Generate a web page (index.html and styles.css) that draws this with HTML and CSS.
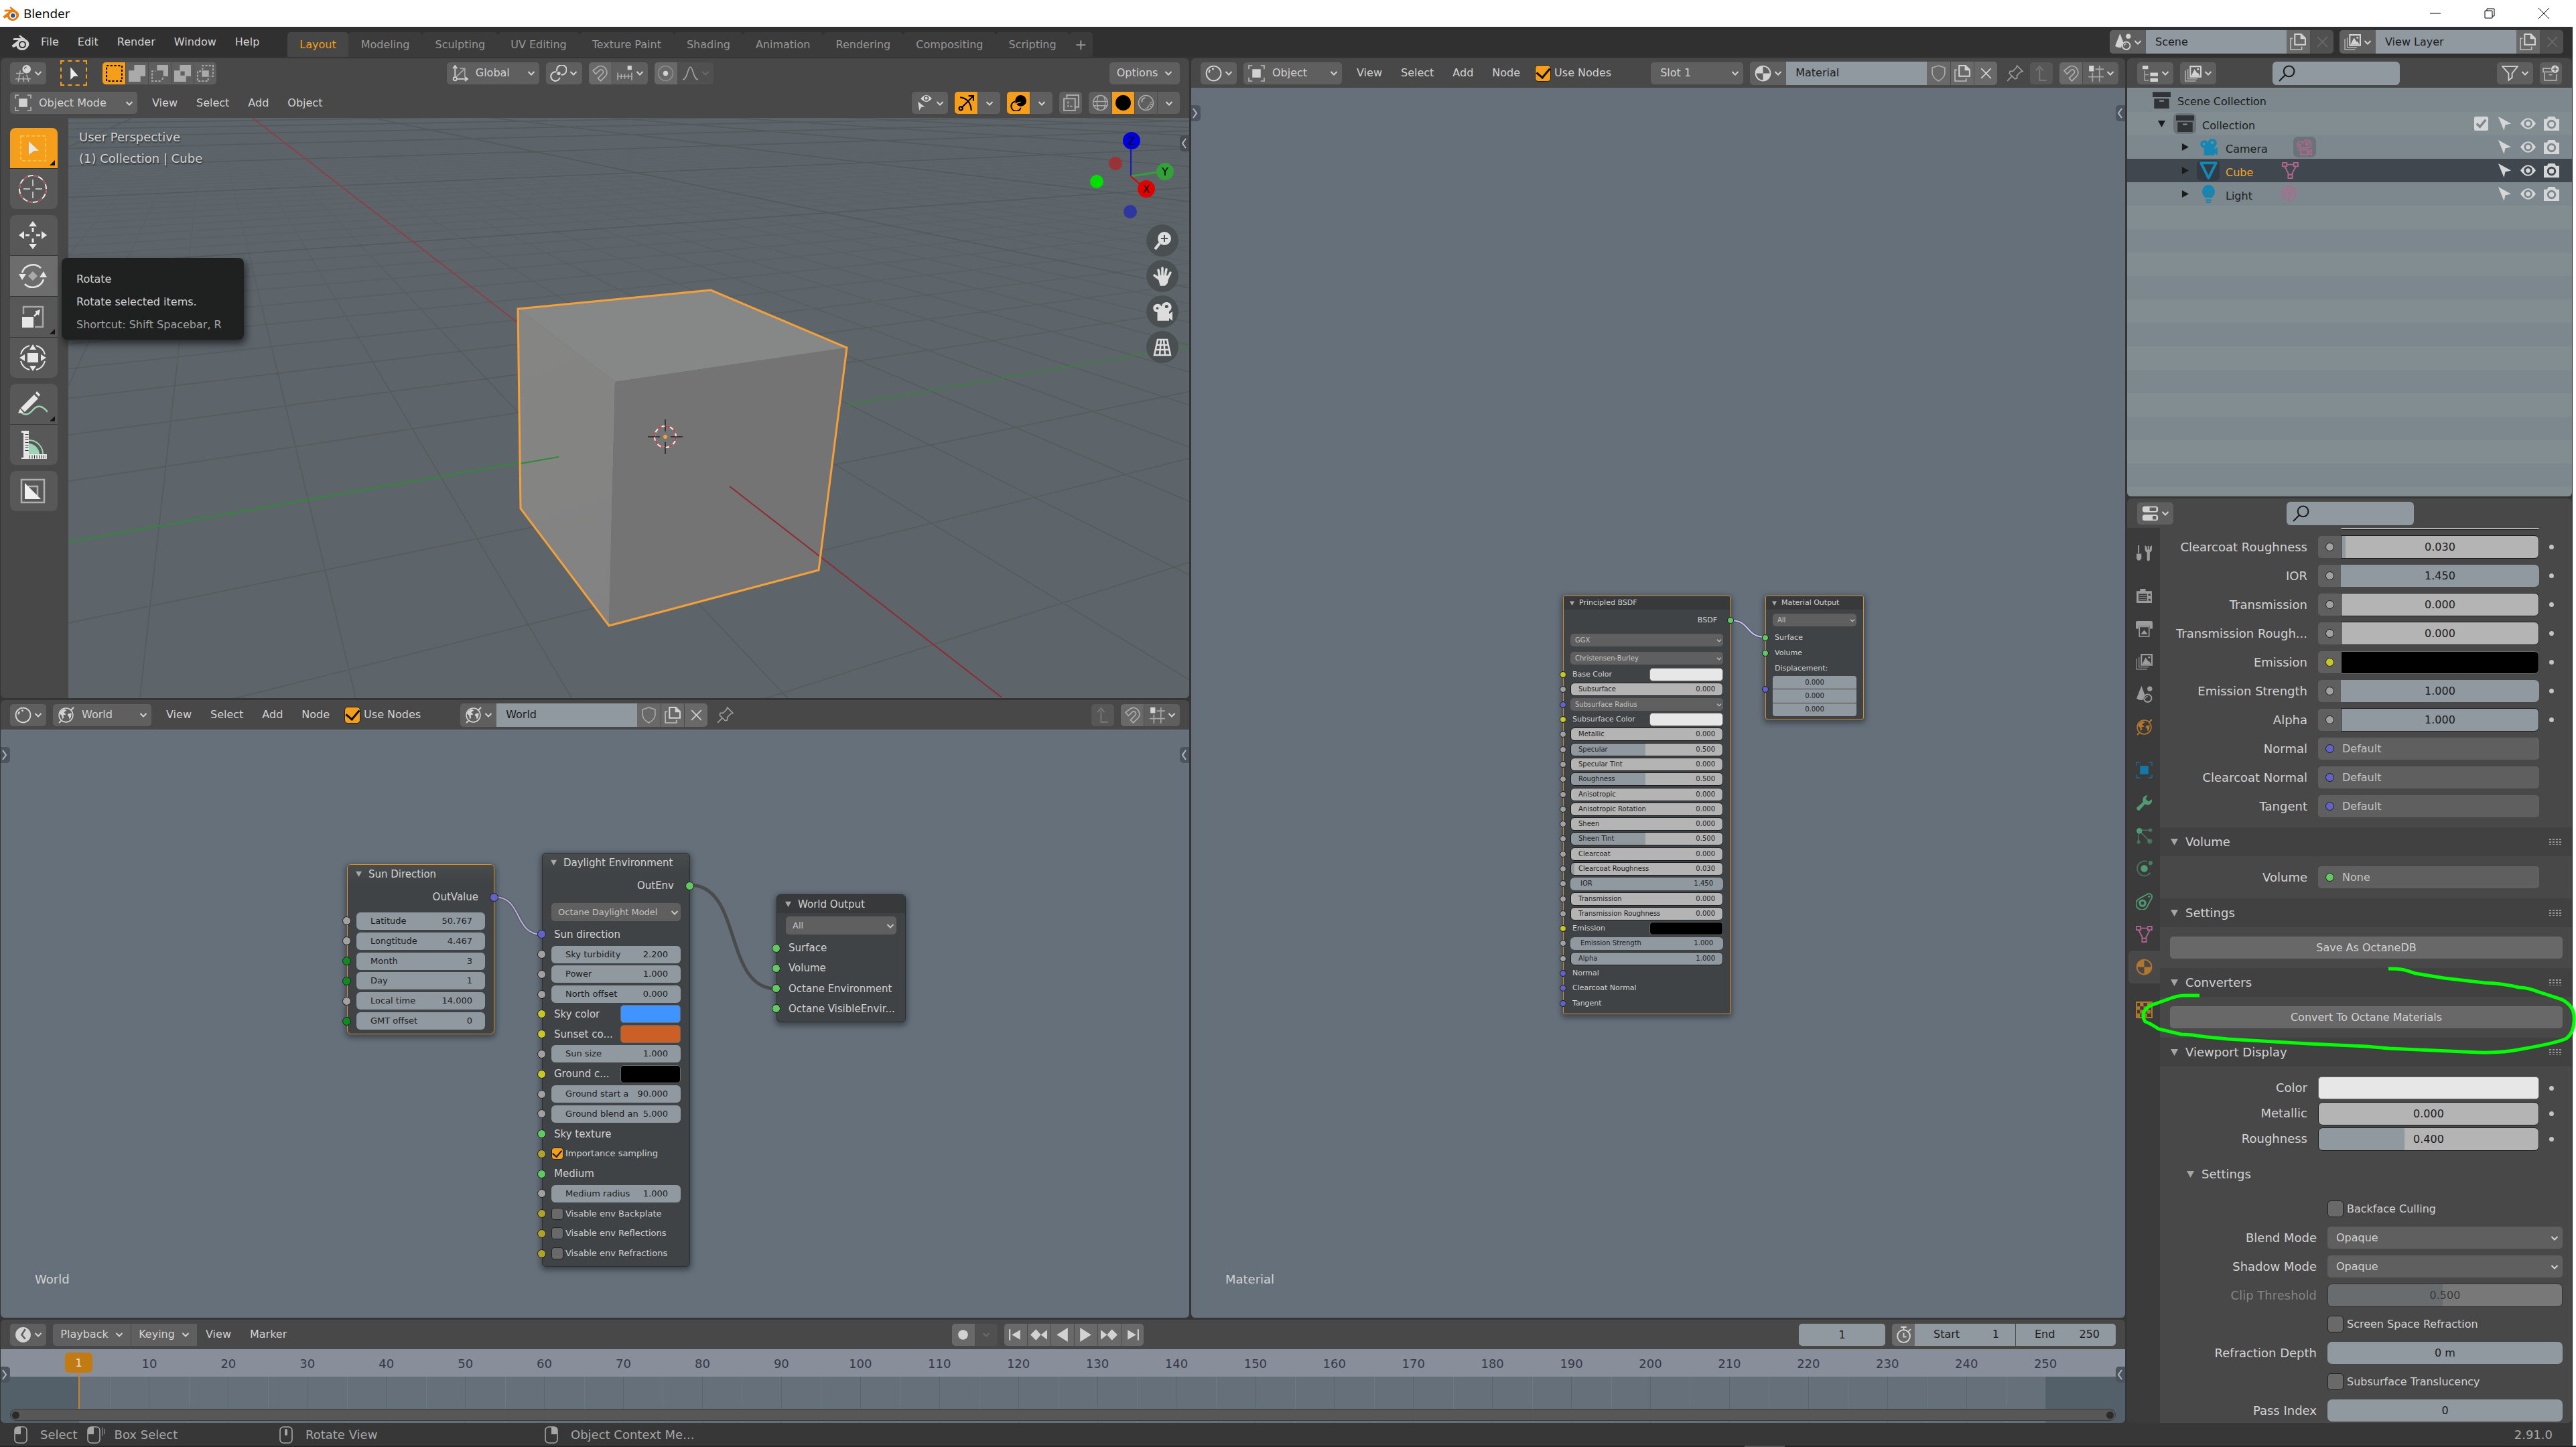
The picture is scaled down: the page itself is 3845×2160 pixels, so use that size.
FILE: index.html
```html
<!DOCTYPE html>
<html lang="en">
<head>
<meta charset="utf-8">
<title>Blender</title>
<link rel="stylesheet" href="styles.css">
</head>
<body>
<svg class="sprite" aria-hidden="true">
  <defs>
  <symbol id="chev" viewBox="0 0 12 12"><path d="M1.500 4L6 8.500L10.500 4" fill="none" stroke="currentColor" stroke-width="2"/></symbol>
  <symbol id="left" viewBox="0 0 12 24"><path d="M9 5L4 12L9 19" fill="none" stroke="currentColor" stroke-width="2"/></symbol>
  <symbol id="right" viewBox="0 0 12 24"><path d="M3 5L8 12L3 19" fill="none" stroke="currentColor" stroke-width="2"/></symbol>
  <symbol id="logo" viewBox="0 0 28 26"><path d="M13 2L25 11Q28 15 26 19Q22 25 17 25Q10 25 8 19L3 21L1 18L11 10H3L4 7H15L12 4Z" fill="currentColor"/><circle cx="17" cy="16.500" r="5.500" fill="var(--hole)"/><circle cx="17" cy="16.500" r="3.500" fill="var(--dot)"/></symbol>
  <symbol id="ed3d" viewBox="0 0 24 24"><path d="M2 12H13M1 20H23M8 8L5 24M17 14L20 24M12 16L13 24" stroke="currentColor" stroke-width="1.500" opacity=".7"/><circle cx="17" cy="6" r="6" fill="currentColor"/><path d="M14 6Q14 3 17 3" stroke="#5f5f5f" fill="none"/></symbol>
  <symbol id="cursor" viewBox="0 0 24 24"><path d="M7 3L18 16L12 16L7 21Z" fill="currentColor"/></symbol>
  <symbol id="boxsel" viewBox="0 0 24 24"><path d="M1 1H23V23H1Z" fill="none" stroke="currentColor" stroke-width="2" stroke-dasharray="3 2.500"/></symbol>
  <symbol id="selext" viewBox="0 0 24 24"><path d="M8 0H24V16H17V24H0V8H8Z" fill="currentColor"/></symbol>
  <symbol id="selsub" viewBox="0 0 24 24"><path d="M8 0H24V16H17V8H8Z" fill="currentColor"/><path d="M13 23H1V9H6M16 18V23" fill="none" stroke="currentColor" stroke-width="2" stroke-dasharray="3 2"/></symbol>
  <symbol id="seldiff" viewBox="0 0 24 24"><path fill-rule="evenodd" d="M8 0H24V16H17V24H0V8H8ZM9 9V15H15V9Z" fill="currentColor"/></symbol>
  <symbol id="selint" viewBox="0 0 24 24"><path d="M7 8H17V17H7Z" fill="currentColor"/><path d="M8 7V1H23V16H18M6 9H1V23H16V18" fill="none" stroke="currentColor" stroke-width="2" stroke-dasharray="3 2"/></symbol>
  <symbol id="objmode" viewBox="0 0 24 24"><path d="M6 6H18V18H6Z" fill="currentColor"/><path d="M1 6V1H6M18 1H23V6M23 18V23H18M6 23H1V18" fill="none" stroke="currentColor" stroke-width="2" opacity=".6"/></symbol>
  <symbol id="axes" viewBox="0 0 24 24"><g fill="none" stroke="currentColor" stroke-width="1.700"><circle cx="5" cy="20" r="2.500"/><path d="M5 17V2M2 5L5 1L8 5M8 20H22M19 17L23 20L19 23"/><path d="M7 17L18 6M12 5H19V12M19 5V17" opacity=".6"/></g></symbol>
  <symbol id="pivot" viewBox="0 0 24 24"><g fill="none" stroke="currentColor" stroke-width="2"><path d="M10 9A7 7 0 1 1 16 14"/><path d="M9 10A6.500 6.500 0 1 0 14 18"/></g><circle cx="12.500" cy="12" r="2.500" fill="currentColor"/></symbol>
  <symbol id="magnet" viewBox="0 0 24 24"><g fill="none" stroke="currentColor" stroke-width="1.600" opacity=".65"><path d="M2 8L10 2Q16 0 20 5Q24 11 20 16L13 23L9 19L16 12Q18 9 15 7Q13 6 11 8L6 13Z"/></g></symbol>
  <symbol id="snapinc" viewBox="0 0 24 24"><path d="M1 16H23M2 11V22M7 13V20M12 13V20M17 13V20M22 11V22" stroke="currentColor" stroke-width="1.500" opacity=".7"/><path d="M16 1H22V7H16Z" fill="currentColor"/></symbol>
  <symbol id="snapgrid" viewBox="0 0 24 24"><path d="M8 11V24M18 1V24M12 6H24M2 17H24" stroke="currentColor" stroke-width="1.700" opacity=".6"/><path d="M3 1H10V9H3Z" fill="currentColor"/></symbol>
  <symbol id="prop" viewBox="0 0 24 24"><circle cx="12" cy="12" r="10.500" fill="none" stroke="currentColor" stroke-width="1.500" opacity=".35"/><circle cx="12" cy="12" r="3.500" fill="currentColor"/></symbol>
  <symbol id="curve" viewBox="0 0 24 24"><path d="M1 21C8 21 8 3 12 3S16 21 23 21" fill="none" stroke="currentColor" stroke-width="1.700"/></symbol>
  <symbol id="visib" viewBox="0 0 24 24"><path d="M2 10L12 18L7 18L4 23Z" fill="currentColor"/><path d="M6 6Q14 -4 22 6Q14 15 6 6Z" fill="currentColor"/><circle cx="14" cy="5.500" r="2.800" fill="none" stroke="#5f5f5f" stroke-width="1.500"/></symbol>
  <symbol id="gizmo" viewBox="0 0 24 24"><g fill="none" stroke="currentColor" stroke-width="2"><path d="M3 4Q18 6 19 23"/><path d="M5 19L21 3M15 2H22V9"/><circle cx="4" cy="20" r="2.500"/></g></symbol>
  <symbol id="overlay" viewBox="0 0 24 24"><circle cx="15" cy="9" r="8" fill="currentColor"/><path d="M7 10A7 7 0 1 0 15 19" fill="none" stroke="currentColor" stroke-width="2"/><path d="M8 15A7 7 0 0 1 15 11" fill="none" stroke="#f49e1c" stroke-width="1.500"/></symbol>
  <symbol id="xray" viewBox="0 0 24 24"><path d="M6 5V1H23V18H19M2 6H18V23H2Z" fill="none" stroke="currentColor" stroke-width="2"/><path d="M8 10V17H14" fill="none" stroke="currentColor" stroke-width="2" stroke-dasharray="3 2"/></symbol>
  <symbol id="wire" viewBox="0 0 24 24"><g fill="none" stroke="currentColor" stroke-width="1.400"><circle cx="12" cy="12" r="10.500"/><path d="M9 2Q5 12 9 22M17 3Q21 12 17 21M2 10H22M3 16H21"/></g></symbol>
  <symbol id="solid" viewBox="0 0 24 24"><circle cx="12" cy="12" r="11" fill="currentColor"/></symbol>
  <symbol id="rendered" viewBox="0 0 24 24"><circle cx="12" cy="12" r="10.500" fill="none" stroke="currentColor" stroke-width="1.500"/><path d="M6 11Q6 5 11 5" fill="none" stroke="currentColor" stroke-width="2"/><path d="M14 20L20 10M11 21L16 17M18 18L21 12" stroke="currentColor" stroke-width="1.500" stroke-dasharray="2 1"/></symbol>
  <symbol id="ball" viewBox="0 0 24 24"><circle cx="12" cy="12" r="10.500" fill="none" stroke="currentColor" stroke-width="1.800"/><path d="M5.500 11Q5.500 8 7 7" fill="none" stroke="currentColor" stroke-width="2.200"/><circle cx="11" cy="5.500" r="1.500" fill="currentColor"/></symbol>
  <symbol id="material" viewBox="0 0 24 24"><circle cx="12" cy="12" r="10.500" fill="none" stroke="currentColor" stroke-width="1.800"/><path d="M12 1.500A10.500 10.500 0 0 0 1.500 12H12ZM12 12V22.500A10.500 10.500 0 0 0 22.500 12Z" fill="currentColor"/></symbol>
  <symbol id="world" viewBox="0 0 24 24"><circle cx="12" cy="12" r="10" fill="none" stroke="currentColor" stroke-width="1.500"/><path d="M4 7L9 3L13 5L9 8L12 11L8 12L9 15L7 18L6 13L3 10ZM15 10L20 9L19 15L17 18L16 14L14 12Z" fill="currentColor"/><path d="M2 23L5 20M19 5L23 1" stroke="currentColor" stroke-width="2"/></symbol>
  <symbol id="shield" viewBox="0 0 24 24"><path d="M12 1L21 4V12Q20 19 12 23Q4 19 3 12V4Z" fill="none" stroke="currentColor" stroke-width="1.600"/></symbol>
  <symbol id="copy" viewBox="0 0 24 24"><path fill="none" stroke="currentColor" stroke-width="2" d="M7 1H16L22 7V16H7Z"/><path d="M15 1V8H22Z" fill="currentColor"/><path d="M4 7H1V23H17V19" fill="none" stroke="currentColor" stroke-width="1.600" opacity=".8"/></symbol>
  <symbol id="x" viewBox="0 0 24 24"><path d="M5 5L19 19M19 5L5 19" stroke="currentColor" stroke-width="1.600"/></symbol>
  <symbol id="pin" viewBox="0 0 24 24"><path d="M15 1L23 9L20 10L15 15V19L12 20L4 12L5 9H9L14 4ZM8 16L1 23" fill="none" stroke="currentColor" stroke-width="1.600"/></symbol>
  <symbol id="up" viewBox="0 0 24 24"><path d="M9 5V22H19M4 8L9 2L14 8" fill="none" stroke="currentColor" stroke-width="1.600"/></symbol>
  <symbol id="scene" viewBox="0 0 24 24"><path d="M8 0L13 13Q11 14 10 20Q5 21 1 18Z" fill="currentColor"/><circle cx="20" cy="4" r="3.500" fill="currentColor"/><circle cx="17" cy="17.500" r="5.500" fill="none" stroke="currentColor" stroke-width="1.800"/><path d="M14 18Q14 15 17 15" stroke="currentColor" fill="none"/></symbol>
  <symbol id="layers" viewBox="0 0 24 24"><path d="M8 2H23V17H8Z" fill="none" stroke="currentColor" stroke-width="2"/><path d="M9 16L14 6L18 12L19 11L22 16Z" fill="currentColor"/><circle cx="19" cy="6" r="1.500" fill="currentColor"/><path d="M4.500 6V20H18M1 8V23H16" fill="none" stroke="currentColor" stroke-width="1.500" opacity=".7"/></symbol>
  <symbol id="tree" viewBox="0 0 24 24"><path d="M1 1H9V6H1ZM12 11H23V16H12ZM12 19H23V24H12Z" fill="currentColor"/><path d="M4 8V22H10M4 14H10" fill="none" stroke="currentColor" stroke-width="1.500" opacity=".6"/></symbol>
  <symbol id="funnel" viewBox="0 0 24 24"><path d="M1 2H23L15 12V18L10 22V12Z" fill="none" stroke="currentColor" stroke-width="1.800"/></symbol>
  <symbol id="newcoll" viewBox="0 0 24 24"><path d="M12 5H1V10H14M3 11V22H20V13M9 14H14" fill="none" stroke="currentColor" stroke-width="1.700" opacity=".7"/><circle cx="18" cy="6" r="5.500" fill="currentColor"/><path d="M18 2.500V9.500M14.500 6H21.500" stroke="#5f5f5f" stroke-width="1.500"/></symbol>
  <symbol id="search" viewBox="0 0 24 24"><circle cx="15" cy="9" r="7.500" fill="none" stroke="currentColor" stroke-width="2"/><path d="M9.500 14.500L1 23" stroke="currentColor" stroke-width="2"/></symbol>
  <symbol id="coll" viewBox="0 0 24 24"><path d="M0 1H24V8H0ZM2 10H22V23H2Z" fill="currentColor"/><path d="M9 12H15V14H9Z" fill="#838e93"/></symbol>
  <symbol id="camera" viewBox="0 0 24 24"><path fill-rule="evenodd" d="M6 3A5 5 0 0 1 11 6A6 6 0 1 1 20 12V15L24 12V23L20 20V23H6V13A5 5 0 0 1 6 3ZM6 6.500A1.500 1.500 0 1 0 6 9.500A1.500 1.500 0 0 0 6 6.500ZM17 4A2 2 0 1 0 17 8A2 2 0 0 0 17 4Z" fill="currentColor"/></symbol>
  <symbol id="cameraline" viewBox="0 0 24 24"><g fill="none" stroke="currentColor" stroke-width="1.800"><path d="M5 13A4.500 4.500 0 1 1 10 6A6 6 0 1 1 20 12Q14 14 5 13Z"/><circle cx="16" cy="7" r="2"/><circle cx="6" cy="9" r="1"/><path d="M3 16H7V23H17V16H7M17 20L22 16V23Z"/></g></symbol>
  <symbol id="mesh" viewBox="0 0 24 24"><path d="M2 2H22L12 22Z" fill="none" stroke="currentColor" stroke-width="3.500" stroke-linejoin="round"/></symbol>
  <symbol id="meshdata" viewBox="0 0 24 24"><g fill="none" stroke="currentColor" stroke-width="1.800"><path d="M1 1H7V6H1ZM17 1H23V6H17ZM9 18H15V23H9ZM7 3.500H17M4 6L10 18M20 6L14 18"/></g></symbol>
  <symbol id="light" viewBox="0 0 24 24"><path d="M12 0A9 9 0 0 1 17 16V17H7V16A9 9 0 0 1 12 0ZM8 19H16V21H8ZM9 22H15V24H9Z" fill="currentColor"/><path d="M8 9L12 12L16 9" fill="none" stroke="#55707e" stroke-width="1.500"/></symbol>
  <symbol id="lightdata" viewBox="0 0 24 24"><g fill="none" stroke="currentColor" stroke-width="1.900"><path d="M8 20A10 10 0 1 1 16 20"/><path d="M9 15A5.500 5.500 0 1 1 15 15"/></g><path d="M10 9H14L13 14V24H11V14Z" fill="currentColor"/></symbol>
  <symbol id="eye" viewBox="0 0 24 24"><path fill-rule="evenodd" d="M0 12Q12 -5 24 12Q12 29 0 12ZM12 5.500A6.500 6.500 0 1 0 12 18.500A6.500 6.500 0 0 0 12 5.500Z" fill="currentColor"/><circle cx="12" cy="12" r="3.500" fill="currentColor"/></symbol>
  <symbol id="photo" viewBox="0 0 24 24"><path fill-rule="evenodd" d="M0 5H5L7 1H17L19 5H24V23H0ZM12 6A7 7 0 1 0 12 20A7 7 0 0 0 12 6Z" fill="currentColor"/><circle cx="12" cy="13" r="4" fill="currentColor"/></symbol>
  <symbol id="ptr" viewBox="0 0 24 24"><path d="M2 1L22 12L13 14L11 23Z" fill="currentColor"/></symbol>
  <symbol id="tickbox" viewBox="0 0 24 24"><rect x="1" y="1" width="22" height="22" rx="3" fill="currentColor"/><path d="M5 12L10 17L19 6" fill="none" stroke="#7b868b" stroke-width="3.500"/></symbol>
  <symbol id="toggles" viewBox="0 0 28 24"><rect x="1" y="0" width="26" height="10" rx="4" fill="currentColor"/><rect x="1" y="14" width="26" height="10" rx="4" fill="currentColor"/><path d="M13 2H24V8H13ZM18 16H24V22H18Z" fill="#5f5f5f"/></symbol>
  <symbol id="tools" viewBox="0 0 24 24"><path d="M4 1V12M18 2V22" stroke="currentColor" stroke-width="1.800"/><path d="M1 13H8V20Q4 26 1 20ZM13 1V7Q14 11 16 11V22Q18 25 20 22V11Q23 10 23 6V1L20 3V7H16V3Z" fill="currentColor"/></symbol>
  <symbol id="render" viewBox="0 0 24 24"><path d="M1 5H6V2H14V5H23V22H1Z" fill="currentColor"/><path d="M4 9H16V19H4Z" fill="#3b3b3b"/><path d="M5 11H15M5 14H15M5 17H15" stroke="currentColor"/><path d="M18 9H21V12H18ZM18 16H21V19H18Z" fill="#3b3b3b"/></symbol>
  <symbol id="output" viewBox="0 0 24 24"><path d="M0 3Q0 1 2 1H22Q24 1 24 3V12H20V8H4V12H0Z" fill="currentColor"/><path d="M5 9H19V23H5Z" fill="none" stroke="currentColor" stroke-width="1.500"/><path d="M7 20L12 14L17 20Z" fill="currentColor"/></symbol>
  <symbol id="wrench" viewBox="0 0 24 24"><path d="M17 1L14 6L18 10L23 7Q24 14 17 15Q15 15 13 14L5 23Q1 23 1 19L10 11Q8 2 17 1Z" fill="currentColor"/></symbol>
  <symbol id="particles" viewBox="0 0 24 24"><path d="M4 4H20M4 4V20M4 4L20 20" stroke="currentColor" stroke-width="1.500" opacity=".6"/><circle cx="5" cy="5" r="4" fill="currentColor"/><circle cx="21" cy="4" r="2.500" fill="currentColor" opacity=".6"/><circle cx="20" cy="20" r="3.500" fill="currentColor" opacity=".6"/><circle cx="4" cy="21" r="2.500" fill="currentColor" opacity=".6"/></symbol>
  <symbol id="physics" viewBox="0 0 24 24"><circle cx="12" cy="12" r="5" fill="currentColor"/><path d="M16 2A10.500 10.500 0 1 0 21 18" fill="none" stroke="currentColor" stroke-width="1.800" opacity=".6"/><circle cx="21" cy="4" r="3" fill="currentColor" opacity=".7"/></symbol>
  <symbol id="constraint" viewBox="0 0 24 24"><path d="M5 8L18 1Q24 1 23 7L17 18A8.500 8.500 0 1 1 5 8Z" fill="none" stroke="currentColor" stroke-width="1.800"/><circle cx="9.500" cy="14.500" r="4" fill="none" stroke="currentColor" stroke-width="3"/><circle cx="19" cy="5" r="1.500" fill="currentColor"/></symbol>
  <symbol id="checker" viewBox="0 0 24 24"><path d="M1 1H23V23H1Z" fill="none" stroke="currentColor" stroke-width="2"/><path d="M6 2H11V7H6ZM16 2H21V7H16ZM2 7H6V12H2ZM11 7H16V12H11ZM6 12H11V17H6ZM16 12H21V17H16ZM2 17H6V22H2ZM11 17H16V22H11Z" fill="currentColor"/></symbol>
  <symbol id="clock" viewBox="0 0 24 24"><circle cx="12" cy="12" r="11" fill="currentColor"/><path d="M15 4L10 12L15 18" fill="none" stroke="#5f5f5f" stroke-width="2.500"/></symbol>
  <symbol id="stopwatch" viewBox="0 0 24 24"><circle cx="12" cy="14" r="9" fill="none" stroke="currentColor" stroke-width="2"/><path d="M12 5V1M8 1H16M19 7L22 4M12 9V15H16" fill="none" stroke="currentColor" stroke-width="1.800"/></symbol>
  <symbol id="first" viewBox="0 0 24 24"><path d="M4 4V20" stroke="currentColor" stroke-width="2"/><path d="M19 5V19L7 12Z" fill="currentColor"/></symbol>
  <symbol id="last" viewBox="0 0 24 24"><path d="M20 4V20" stroke="currentColor" stroke-width="2"/><path d="M5 5V19L17 12Z" fill="currentColor"/></symbol>
  <symbol id="prevkey" viewBox="0 0 24 24"><path d="M8 4L15 12L8 20L0 12ZM24 5V19L15 12Z" fill="currentColor"/></symbol>
  <symbol id="nextkey" viewBox="0 0 24 24"><path d="M16 4L24 12L16 20L9 12ZM0 5V19L9 12Z" fill="currentColor"/></symbol>
  <symbol id="playrev" viewBox="0 0 24 24"><path d="M20 2V22L4 12Z" fill="currentColor"/></symbol>
  <symbol id="play" viewBox="0 0 24 24"><path d="M4 2V22L20 12Z" fill="currentColor"/></symbol>
  <symbol id="mouse" viewBox="0 0 28 26"><rect x="1" y="1" width="18" height="24" rx="5" fill="none" stroke="currentColor" stroke-width="1.600"/></symbol>
  <symbol id="tri" viewBox="0 0 12 12"><path d="M0 1H12L6 12Z" fill="currentColor"/></symbol>
  <symbol id="grip" viewBox="0 0 19 9"><path d="M0 1H19M0 5H19M0 9H19" stroke="currentColor" stroke-width="1.600" stroke-dasharray="3 2"/></symbol>
  </defs>
</svg>

<div class="app">
  <header class="titlebar">
    <svg class="ic applogo"><use href="#logo"/></svg><span class="apptitle">Blender</span>
    <div class="wincontrols">
      <button aria-label="Minimize"><svg viewBox="0 0 16 16"><path d="M0 8H16" stroke="#000"/></svg></button>
      <button aria-label="Restore"><svg viewBox="0 0 16 16"><path d="M1 4H12V15H1ZM4 4V1H15V12H12" fill="none" stroke="#000"/></svg></button>
      <button aria-label="Close"><svg viewBox="0 0 16 16"><path d="M0 0L16 16M16 0L0 16" stroke="#000"/></svg></button>
    </div>
  </header>

  <nav class="topbar">
    <svg class="ic menulogo"><use href="#logo"/></svg>
    <div class="menus"><button>File</button><button>Edit</button><button>Render</button><button>Window</button><button>Help</button></div>
    <div class="tabs"><button class="on">Layout</button><button>Modeling</button><button>Sculpting</button><button>UV Editing</button><button>Texture Paint</button><button>Shading</button><button>Animation</button><button>Rendering</button><button>Compositing</button><button>Scripting</button><button class="plus">+</button></div>
    <div class="idblocks">
      <div class="grp tall"><button class="b w54" aria-label="Scene list"><svg class="ic"><use href="#scene"/></svg><svg class="ch"><use href="#chev"/></svg></button><input class="name" aria-label="Scene name" value="Scene"><button class="b w35 lt" aria-label="New scene"><svg class="ic"><use href="#copy"/></svg></button><button class="b w35 dim" aria-label="Delete scene"><svg class="ic"><use href="#x"/></svg></button></div>
      <div class="grp tall"><button class="b w54" aria-label="View layers"><svg class="ic"><use href="#layers"/></svg><svg class="ch"><use href="#chev"/></svg></button><input class="name" aria-label="View layer name" value="View Layer"><button class="b w35 lt" aria-label="New view layer"><svg class="ic"><use href="#copy"/></svg></button><button class="b w35 dim" aria-label="Delete view layer"><svg class="ic"><use href="#x"/></svg></button></div>
    </div>
  </nav>

  <main class="workspace">
    <div class="main-col">
      <div class="editors">
        <div class="left-col">
          <section class="area view3d">
            <div class="bar">
              <div class="grp"><button class="b w54" aria-label="Editor type"><svg class="ic"><use href="#ed3d"/></svg><svg class="ch"><use href="#chev"/></svg></button></div>
              <button class="activetool" aria-label="Active tool"><svg class="ic"><use href="#cursor"/></svg></button>
              <div class="grp selmodes"><button class="b w34 on" aria-label="Set"><svg class="ic"><use href="#boxsel"/></svg></button><button class="b w34 gray" aria-label="Extend"><svg class="ic"><use href="#selext"/></svg></button><button class="b w34 gray" aria-label="Subtract"><svg class="ic"><use href="#selsub"/></svg></button><button class="b w34 gray" aria-label="Difference"><svg class="ic"><use href="#seldiff"/></svg></button><button class="b w34 gray" aria-label="Intersect"><svg class="ic"><use href="#selint"/></svg></button></div>
              <span class="s337"></span>
              <div class="dd w138"><svg class="ic"><use href="#axes"/></svg><select aria-label="Orientation"><option>Global</option></select><svg class="ch"><use href="#chev"/></svg></div>
              <div class="grp"><button class="b w54" aria-label="Pivot"><svg class="ic"><use href="#pivot"/></svg><svg class="ch"><use href="#chev"/></svg></button></div>
              <div class="grp"><button class="b w34 lt" aria-label="Snap"><svg class="ic"><use href="#magnet"/></svg></button><button class="b w54" aria-label="Snap to"><svg class="ic"><use href="#snapinc"/></svg><svg class="ch"><use href="#chev"/></svg></button></div>
              <div class="grp"><button class="b w34 lt" aria-label="Proportional editing"><svg class="ic"><use href="#prop"/></svg></button><button class="b w54 dim" aria-label="Falloff"><svg class="ic bright"><use href="#curve"/></svg><svg class="ch"><use href="#chev"/></svg></button></div>
              <span class="s577"></span>
              <div class="grp"><button class="b opts">Options<svg class="ch"><use href="#chev"/></svg></button></div>
            </div>
            <div class="bar second">
              <div class="dd w190"><svg class="ic"><use href="#objmode"/></svg><select aria-label="Mode"><option>Object Mode</option></select><svg class="ch"><use href="#chev"/></svg></div>
              <div class="menus"><button>View</button><button>Select</button><button>Add</button><button>Object</button></div>
              <span class="fill"></span>
              <div class="grp"><button class="b w54" aria-label="Visibility"><svg class="ic"><use href="#visib"/></svg><svg class="ch"><use href="#chev"/></svg></button></div>
              <div class="grp"><button class="b w34 on" aria-label="Gizmos"><svg class="ic"><use href="#gizmo"/></svg></button><button class="b w34" aria-label="Gizmo options"><svg class="ch"><use href="#chev"/></svg></button></div>
              <div class="grp"><button class="b w34 on" aria-label="Overlays"><svg class="ic"><use href="#overlay"/></svg></button><button class="b w34" aria-label="Overlay options"><svg class="ch"><use href="#chev"/></svg></button></div>
              <div class="grp"><button class="b w34 gray" aria-label="X-ray"><svg class="ic"><use href="#xray"/></svg></button></div>
              <div class="grp"><button class="b w34 gray" aria-label="Wireframe"><svg class="ic"><use href="#wire"/></svg></button><button class="b w34 on" aria-label="Solid"><svg class="ic"><use href="#solid"/></svg></button><button class="b w34 gray" aria-label="Rendered"><svg class="ic"><use href="#rendered"/></svg></button><button class="b w34" aria-label="Shading options"><svg class="ch"><use href="#chev"/></svg></button></div>
            </div>
            <div class="v3body">
              <div class="toolbar">
                <div class="toolgrp">
                  <button class="on" aria-label="Select Box"><svg viewBox="0 0 44 44"><rect x="4" y="4" width="37" height="37" fill="none" stroke="#ffc04a" stroke-width="2" stroke-dasharray="5 3"/><path d="M16 12L31 26L24 26L16 32Z" fill="#e6e6e6"/></svg><i></i></button>
                  <button aria-label="Cursor"><svg viewBox="0 0 44 44" fill="none"><circle cx="22" cy="22" r="20" stroke="#eee" stroke-width="2"/><circle cx="22" cy="22" r="20" stroke="#a04a50" stroke-width="2" stroke-dasharray="8 7.700"/><path d="M22 8V18M22 26V36M8 22H18M26 22H36" stroke="#ddd" stroke-width="1.500"/></svg></button>
                </div>
                <div class="toolgrp">
                  <button aria-label="Move"><svg viewBox="0 0 44 44"><path d="M22 1L28 9H16ZM22 43L28 35H16ZM1 22L9 16V28ZM43 22L35 16V28Z" fill="#e6e6e6"/><path d="M22 11V17M22 27V33M11 22H17M27 22H33" stroke="#e6e6e6" stroke-width="3"/></svg></button>
                  <button class="hov" aria-label="Rotate"><svg viewBox="0 0 44 44"><path d="M6 17A17 17 0 0 1 34 10M38 27A17 17 0 0 1 10 34" fill="none" stroke="#e6e6e6" stroke-width="2.500"/><path d="M1 19H12L6 28ZM32 24H43L38 15Z" fill="#e6e6e6"/><path d="M22 15L29 22L22 29L15 22Z" fill="#aaa"/></svg></button>
                  <button aria-label="Scale"><svg viewBox="0 0 44 44"><path d="M8 18V7H37V37H25" fill="none" stroke="#a6a6a6" stroke-width="2.500"/><path d="M6 22H23V38H6Z" fill="#e6e6e6"/><path d="M24 21L29 16" stroke="#e6e6e6" stroke-width="2.500"/><path d="M33 11L31 20L25 14Z" fill="#e6e6e6"/></svg><i></i></button>
                  <button aria-label="Transform"><svg viewBox="0 0 44 44"><path d="M14 15H30V29H14Z" fill="#e6e6e6"/><path d="M4 17A18 18 0 0 1 17 4M27 4A18 18 0 0 1 40 17M40 27A18 18 0 0 1 27 40M17 40A18 18 0 0 1 4 27" fill="none" stroke="#e6e6e6" stroke-width="2"/><path d="M22 2L27 10H17ZM22 42L27 34H17ZM2 22L10 17V27ZM42 22L34 17V27Z" fill="#e6e6e6"/></svg></button>
                </div>
                <div class="toolgrp">
                  <button aria-label="Annotate"><svg viewBox="0 0 44 44"><path d="M3 33Q12 43 22 31T44 34" fill="none" stroke="#9bd3b4" stroke-width="2.500"/><path d="M24 8L30 14L10 34L4 28ZM26 6L28 3L33 8L31 11ZM3 29L8 35L0 36Z" fill="#e6e6e6"/></svg><i></i></button>
                  <button aria-label="Measure"><svg viewBox="0 0 44 44"><path d="M16 20A17 17 0 0 1 32 36H16Z" fill="#9bd3b4"/><path d="M16 15A21 21 0 0 1 37 36" fill="none" stroke="#9bd3b4" stroke-width="2"/><path d="M5 1H16V36H43V43H5V41H8V4H5Z" fill="#e6e6e6"/><path d="M13 6V34" stroke="#333" stroke-width="5" stroke-dasharray="1 3"/><path d="M17 40H42" stroke="#333" stroke-width="5" stroke-dasharray="1 2.500"/></svg></button>
                </div>
                <div class="toolgrp">
                  <button aria-label="Add Cube"><svg viewBox="0 0 44 44"><path d="M5 5H39V39H5ZM15 15H29V29" fill="none" stroke="#b0b0b0" stroke-width="2.500"/><path d="M10 10L34 34H10Z" fill="#f0f0f0"/></svg></button>
                </div>
              </div>
              <div class="viewport">
                <svg class="scene3d" viewBox="102 176 1673 866" preserveAspectRatio="xMidYMid slice">
                  <defs>
                    <linearGradient id="fade" x1="0" y1="176" x2="0" y2="560" gradientUnits="userSpaceOnUse"><stop offset="0" stop-color="#000"/><stop offset="1" stop-color="#fff"/></linearGradient>
                    <mask id="far" maskUnits="userSpaceOnUse" x="102" y="176" width="1673" height="866"><rect x="102" y="176" width="1673" height="866" fill="url(#fade)"/></mask>
                    <linearGradient id="side" x1="772" y1="500" x2="915" y2="900" gradientUnits="userSpaceOnUse"><stop offset="0" stop-color="#858684"/><stop offset="1" stop-color="#828282"/></linearGradient>
                  </defs>
                  <g id="minor" mask="url(#far)" stroke="#575a5a" stroke-width="1.500"></g>
                  <g id="major" stroke="#4f5455" stroke-width="1.500" opacity=".7"></g>
                  <path d="M377 176L773 482" stroke="#8a4148" stroke-width="2"/>
                  <path d="M102 809L790 688" stroke="#2f8a35" stroke-width="2"/>
                  <path d="M1262 605L1775 516" stroke="#3f7d45" stroke-width="2"/>
                  <path d="M773 461L1061 433L1264 519L918 570Z" fill="#868787"/>
                  <path d="M773 461L918 570L909 934L777 759Z" fill="url(#side)"/>
                  <path d="M918 570L1264 519L1222 851L909 934Z" fill="#747475"/>
                  <path d="M777 692L834 682" stroke="#2f8a35" stroke-width="2"/>
                  <path d="M1089 726L1495 1041" stroke="#8f2b33" stroke-width="2"/>
                  <path d="M773 461L1061 433L1264 519L1222 851L909 934L777 759Z" fill="none" stroke="#f3a03a" stroke-width="3"/>
                  <g fill="none"><circle cx="993" cy="652" r="16" stroke="#eee" stroke-width="2"/><circle cx="993" cy="652" r="16" stroke="#c0323a" stroke-width="2" stroke-dasharray="6.300 6.300"/><path d="M993 626V644M993 660V678M967 652H985M1001 652H1019" stroke="#222" stroke-width="1.500"/><circle cx="993" cy="652" r="3" fill="#f3a03a"/></g>
                </svg>
                <p class="viewinfo">User Perspective<br>(1) Collection | Cube</p>
                <svg class="axisgizmo" viewBox="1620 190 140 145"><path d="M1688 263V210" stroke="#1616c8" stroke-width="2"/><path d="M1688 263L1735 256" stroke="#33a03a" stroke-width="3"/><path d="M1688 263L1708 281" stroke="#e00000" stroke-width="2"/><circle cx="1665" cy="244" r="10" fill="#9a3338"/><circle cx="1637" cy="271" r="10" fill="#00e000"/><circle cx="1687" cy="316" r="10" fill="#3036a0"/><circle cx="1689" cy="210" r="13" fill="#0000dc"/><circle cx="1739" cy="256" r="13" fill="#33a03a"/><circle cx="1711" cy="282" r="13" fill="#e00000"/><g font-family="DejaVu Sans" font-size="16" text-anchor="middle"><text x="1689" y="216">Z</text><text x="1739" y="262">Y</text><text x="1711" y="288">X</text></g></svg>
                <div class="navbtns">
                  <button aria-label="Zoom"><svg viewBox="0 0 30 30"><circle cx="18" cy="12" r="10" fill="#ddd"/><path d="M11 19L4 28" stroke="#ddd" stroke-width="4"/><path d="M18 7V17M13 12H23" stroke="#4a4f52" stroke-width="2"/></svg></button>
                  <button aria-label="Pan"><svg viewBox="0 0 30 30" fill="none" stroke="#ddd" stroke-linecap="round" stroke-width="3.500"><path d="M11 16L9 6M15 15V3M19 15L21 5M23 18L27 10M11 20L3 14"/><path d="M10 16H23L21 25L18 28H13Z" fill="#ddd"/></svg></button>
                  <button class="cam" aria-label="Camera view"><svg class="ic"><use href="#camera"/></svg></button>
                  <button aria-label="Perspective"><svg viewBox="0 0 30 30"><path d="M8 4H22L27 27H3ZM13 4L11 27M17 4L19 27M6 12H24M5 19H25" fill="none" stroke="#ddd" stroke-width="2.500"/></svg></button>
                </div>
                <button class="fold r v3" aria-label="Show sidebar"><svg><use href="#left"/></svg></button>
              </div>
            </div>
          </section>

          <section class="area nodes">
            <div class="bar">
              <div class="grp"><button class="b w54" aria-label="Editor type"><svg class="ic"><use href="#ball"/></svg><svg class="ch"><use href="#chev"/></svg></button></div>
              <div class="dd w147"><svg class="ic"><use href="#world"/></svg><select aria-label="Shader type"><option>World</option></select><svg class="ch"><use href="#chev"/></svg></div>
              <div class="menus"><button>View</button><button>Select</button><button>Add</button><button>Node</button></div>
              <label class="chk"><input type="checkbox" checked>Use Nodes</label>
              <div class="grp tall after"><button class="b w54" aria-label="Browse world"><svg class="ic"><use href="#world"/></svg><svg class="ch"><use href="#chev"/></svg></button><input class="name" aria-label="World name" value="World"><button class="b w35 lt gray" aria-label="Fake user"><svg class="ic"><use href="#shield"/></svg></button><button class="b w35 lt" aria-label="New world"><svg class="ic"><use href="#copy"/></svg></button><button class="b w35 lt" aria-label="Unlink"><svg class="ic"><use href="#x"/></svg></button></div>
              <button class="plain" aria-label="Pin"><svg class="ic"><use href="#pin"/></svg></button>
              <span class="fill"></span>
              <div class="grp"><button class="b w34 dim2" aria-label="Parent node tree"><svg class="ic"><use href="#up"/></svg></button></div>
              <div class="grp"><button class="b w34 lt" aria-label="Snap"><svg class="ic"><use href="#magnet"/></svg></button><button class="b w54" aria-label="Snap to"><svg class="ic"><use href="#snapgrid"/></svg><svg class="ch"><use href="#chev"/></svg></button></div>
            </div>
            <div class="canvas">
              <svg class="wires"><g fill="none" stroke-width="5"><path d="M737 250C780 250 765 306 808 306" stroke="#5a5a66"/><path d="M737 250C780 250 765 306 808 306" stroke="#b6b0e0" stroke-width="2"/><path d="M1028 232C1108 232 1078 387 1158 387" stroke="#4b4b4b"/></g></svg>
              <div class="node sun sel">
                <h3><svg><use href="#tri"/></svg>Sun Direction</h3>
                <div class="out">OutValue<i class="sock purple"></i></div>
                <label class="row"><i class="sock"></i><span class="num"><b>Latitude</b><input value="50.767"></span></label>
                <label class="row"><i class="sock"></i><span class="num"><b>Longtitude</b><input value="4.467"></span></label>
                <label class="row"><i class="sock dgreen"></i><span class="num"><b>Month</b><input value="3"></span></label>
                <label class="row"><i class="sock dgreen"></i><span class="num"><b>Day</b><input value="1"></span></label>
                <label class="row"><i class="sock"></i><span class="num"><b>Local time</b><input value="14.000"></span></label>
                <label class="row"><i class="sock dgreen"></i><span class="num"><b>GMT offset</b><input value="0"></span></label>
              </div>
              <div class="node day">
                <h3><svg><use href="#tri"/></svg>Daylight Environment</h3>
                <div class="out">OutEnv<i class="sock green"></i></div>
                <div class="ddrow"><div class="dd"><select aria-label="Daylight model"><option>Octane Daylight Model</option></select><svg class="ch"><use href="#chev"/></svg></div></div>
                <div class="row"><i class="sock purple"></i><span class="lab">Sun direction</span></div>
                <label class="row"><i class="sock"></i><span class="num"><b>Sky turbidity</b><input value="2.200"></span></label>
                <label class="row"><i class="sock"></i><span class="num"><b>Power</b><input value="1.000"></span></label>
                <label class="row"><i class="sock"></i><span class="num"><b>North offset</b><input value="0.000"></span></label>
                <div class="row"><i class="sock yellow"></i><span class="lab">Sky color</span><button class="sw blue" aria-label="Sky color"></button></div>
                <div class="row"><i class="sock yellow"></i><span class="lab">Sunset co...</span><button class="sw orange" aria-label="Sunset color"></button></div>
                <label class="row"><i class="sock"></i><span class="num"><b>Sun size</b><input value="1.000"></span></label>
                <div class="row"><i class="sock yellow"></i><span class="lab">Ground c...</span><button class="sw black" aria-label="Ground color"></button></div>
                <label class="row"><i class="sock"></i><span class="num"><b>Ground start a</b><input value="90.000"></span></label>
                <label class="row"><i class="sock"></i><span class="num"><b>Ground blend an</b><input value="5.000"></span></label>
                <div class="row"><i class="sock green"></i><span class="lab">Sky texture</span></div>
                <div class="row"><i class="sock olive"></i><label class="chk"><input type="checkbox" checked>Importance sampling</label></div>
                <div class="row"><i class="sock green"></i><span class="lab">Medium</span></div>
                <label class="row"><i class="sock"></i><span class="num"><b>Medium radius</b><input value="1.000"></span></label>
                <div class="row"><i class="sock olive"></i><label class="chk"><input type="checkbox">Visable env Backplate</label></div>
                <div class="row"><i class="sock olive"></i><label class="chk"><input type="checkbox">Visable env Reflections</label></div>
                <div class="row"><i class="sock olive"></i><label class="chk"><input type="checkbox">Visable env Refractions</label></div>
              </div>
              <div class="node wout">
                <h3 class="dk"><svg><use href="#tri"/></svg>World Output</h3>
                <div class="ddrow"><div class="dd"><select aria-label="Target"><option>All</option></select><svg class="ch"><use href="#chev"/></svg></div></div>
                <div class="row"><i class="sock green"></i><span class="lab">Surface</span></div>
                <div class="row"><i class="sock green"></i><span class="lab">Volume</span></div>
                <div class="row"><i class="sock green"></i><span class="lab">Octane Environment</span></div>
                <div class="row"><i class="sock green"></i><span class="lab">Octane VisibleEnvir...</span></div>
              </div>
              <p class="treename">World</p>
              <button class="fold l" aria-label="Show toolbar"><svg><use href="#right"/></svg></button>
              <button class="fold r" aria-label="Show sidebar"><svg><use href="#left"/></svg></button>
            </div>
          </section>
        </div>

        <section class="area nodes shader">
          <div class="bar">
            <div class="grp"><button class="b w54" aria-label="Editor type"><svg class="ic"><use href="#ball"/></svg><svg class="ch"><use href="#chev"/></svg></button></div>
            <div class="dd w147"><svg class="ic"><use href="#objmode"/></svg><select aria-label="Shader type"><option>Object</option></select><svg class="ch"><use href="#chev"/></svg></div>
            <div class="menus"><button>View</button><button>Select</button><button>Add</button><button>Node</button></div>
            <label class="chk"><input type="checkbox" checked>Use Nodes</label>
            <div class="dd w138 slot after"><select aria-label="Slot"><option>Slot 1</option></select><svg class="ch"><use href="#chev"/></svg></div>
            <div class="grp tall"><button class="b w54" aria-label="Browse material"><svg class="ic"><use href="#material"/></svg><svg class="ch"><use href="#chev"/></svg></button><input class="name" aria-label="Material name" value="Material"><button class="b w35 lt gray" aria-label="Fake user"><svg class="ic"><use href="#shield"/></svg></button><button class="b w35 lt" aria-label="New material"><svg class="ic"><use href="#copy"/></svg></button><button class="b w35 lt" aria-label="Unlink"><svg class="ic"><use href="#x"/></svg></button></div>
            <button class="plain" aria-label="Pin"><svg class="ic"><use href="#pin"/></svg></button>
            <span class="s11"></span>
            <div class="grp"><button class="b w34 dim2" aria-label="Parent node tree"><svg class="ic"><use href="#up"/></svg></button></div>
            <div class="grp"><button class="b w34 lt" aria-label="Snap"><svg class="ic"><use href="#magnet"/></svg></button><button class="b w54" aria-label="Snap to"><svg class="ic"><use href="#snapgrid"/></svg><svg class="ch"><use href="#chev"/></svg></button></div>
          </div>
          <div class="canvas">
            <svg class="wires"><g fill="none"><path d="M805 795C835 795 827 820 857 820" stroke="#50505c" stroke-width="4"/><path d="M805 795C835 795 827 820 857 820" stroke="#cbc5ff" stroke-width="2"/></g></svg>
            <div class="node small sel bsdf">
              <h3 class="dk"><svg><use href="#tri"/></svg>Principled BSDF</h3>
              <div class="out">BSDF<i class="sock green"></i></div>
              <div class="ddrow"><div class="dd"><select aria-label="Distribution"><option>GGX</option></select><svg class="ch"><use href="#chev"/></svg></div></div>
              <div class="ddrow"><div class="dd"><select aria-label="Subsurface method"><option>Christensen-Burley</option></select><svg class="ch"><use href="#chev"/></svg></div></div>
              <div class="row"><i class="sock yellow"></i><span class="lab">Base Color</span><button class="sw white" aria-label="Base Color"></button></div>
              <label class="row"><i class="sock"></i><span class="num sl"><b>Subsurface</b><input value="0.000"></span></label>
              <div class="row"><i class="sock purple"></i><div class="dd"><select aria-label="Subsurface Radius"><option>Subsurface Radius</option></select><svg class="ch"><use href="#chev"/></svg></div></div>
              <div class="row"><i class="sock yellow"></i><span class="lab">Subsurface Color</span><button class="sw white" aria-label="Subsurface Color"></button></div>
              <label class="row"><i class="sock"></i><span class="num sl"><b>Metallic</b><input value="0.000"></span></label>
              <label class="row"><i class="sock"></i><span class="num sl" style="--fill:49%"><b>Specular</b><input value="0.500"></span></label>
              <label class="row"><i class="sock"></i><span class="num sl"><b>Specular Tint</b><input value="0.000"></span></label>
              <label class="row"><i class="sock"></i><span class="num sl" style="--fill:49%"><b>Roughness</b><input value="0.500"></span></label>
              <label class="row"><i class="sock"></i><span class="num sl"><b>Anisotropic</b><input value="0.000"></span></label>
              <label class="row"><i class="sock"></i><span class="num sl"><b>Anisotropic Rotation</b><input value="0.000"></span></label>
              <label class="row"><i class="sock"></i><span class="num sl"><b>Sheen</b><input value="0.000"></span></label>
              <label class="row"><i class="sock"></i><span class="num sl" style="--fill:49%"><b>Sheen Tint</b><input value="0.500"></span></label>
              <label class="row"><i class="sock"></i><span class="num sl"><b>Clearcoat</b><input value="0.000"></span></label>
              <label class="row"><i class="sock"></i><span class="num sl" style="--fill:2%"><b>Clearcoat Roughness</b><input value="0.030"></span></label>
              <label class="row"><i class="sock"></i><span class="num"><b>IOR</b><input value="1.450"></span></label>
              <label class="row"><i class="sock"></i><span class="num sl"><b>Transmission</b><input value="0.000"></span></label>
              <label class="row"><i class="sock"></i><span class="num sl"><b>Transmission Roughness</b><input value="0.000"></span></label>
              <div class="row"><i class="sock yellow"></i><span class="lab">Emission</span><button class="sw black" aria-label="Emission"></button></div>
              <label class="row"><i class="sock"></i><span class="num"><b>Emission Strength</b><input value="1.000"></span></label>
              <label class="row"><i class="sock"></i><span class="num sl" style="--fill:100%"><b>Alpha</b><input value="1.000"></span></label>
              <div class="row"><i class="sock purple"></i><span class="lab">Normal</span></div>
              <div class="row"><i class="sock purple"></i><span class="lab">Clearcoat Normal</span></div>
              <div class="row"><i class="sock purple"></i><span class="lab">Tangent</span></div>
            </div>
            <div class="node small sel mout">
              <h3 class="dk"><svg><use href="#tri"/></svg>Material Output</h3>
              <div class="ddrow"><div class="dd"><select aria-label="Target"><option>All</option></select><svg class="ch"><use href="#chev"/></svg></div></div>
              <div class="row"><i class="sock green"></i><span class="lab">Surface</span></div>
              <div class="row"><i class="sock green"></i><span class="lab">Volume</span></div>
              <div class="row"><span class="lab">Displacement:</span></div>
              <div class="vec"><i class="sock purple"></i><input aria-label="Displacement X" value="0.000"><input aria-label="Displacement Y" value="0.000"><input aria-label="Displacement Z" value="0.000"></div>
            </div>
            <p class="treename">Material</p>
            <button class="fold l" aria-label="Show toolbar"><svg><use href="#right"/></svg></button>
            <button class="fold r" aria-label="Show sidebar"><svg><use href="#left"/></svg></button>
          </div>
        </section>
      </div>

      <section class="area timeline">
        <div class="bar">
          <div class="grp"><button class="b w54" aria-label="Editor type"><svg class="ic"><use href="#clock"/></svg><svg class="ch"><use href="#chev"/></svg></button></div>
          <div class="grp pk"><button class="b play">Playback<svg class="ch"><use href="#chev"/></svg></button><button class="b key">Keying<svg class="ch"><use href="#chev"/></svg></button></div>
          <div class="menus"><button>View</button><button>Marker</button></div>
          <span class="fill"></span>
          <div class="grp"><button class="b w34 lt" aria-label="Auto keying"><svg class="ic" viewBox="0 0 24 24"><circle cx="12" cy="12" r="7" fill="currentColor"/></svg></button><button class="b w34 dim" aria-label="Keying options"><svg class="ch"><use href="#chev"/></svg></button></div>
          <div class="grp"><button class="b w34 lt" aria-label="First frame"><svg class="ic"><use href="#first"/></svg></button><button class="b w35 lt" aria-label="Previous keyframe"><svg class="ic"><use href="#prevkey"/></svg></button><button class="b w35 lt" aria-label="Play reversed"><svg class="ic"><use href="#playrev"/></svg></button><button class="b w35 lt" aria-label="Play"><svg class="ic"><use href="#play"/></svg></button><button class="b w35 lt" aria-label="Next keyframe"><svg class="ic"><use href="#nextkey"/></svg></button><button class="b w34 lt" aria-label="Last frame"><svg class="ic"><use href="#last"/></svg></button></div>
          <span class="fill"></span>
          <div class="grp"><input class="frame" aria-label="Current frame" value="1"></div>
          <div class="grp"><button class="b w34 lt" aria-label="Preview range"><svg class="ic"><use href="#stopwatch"/></svg></button><label class="range">Start<input value="1"></label><label class="range">End<input value="250"></label></div>
        </div>
        <div class="track">
          <div class="cells">
            <span>10</span><span>20</span><span>30</span><span>40</span><span>50</span><span>60</span><span>70</span><span>80</span><span>90</span><span>100</span><span>110</span><span>120</span><span>130</span><span>140</span><span>150</span><span>160</span><span>170</span><span>180</span><span>190</span><span>200</span><span>210</span><span>220</span><span>230</span><span>240</span><span>250</span>
          </div>
          <div class="scroller"><i></i><i></i></div>
          <div class="playhead">1</div>
          <button class="fold l" aria-label="Show toolbar"><svg><use href="#right"/></svg></button>
          <button class="fold r" aria-label="Show sidebar"><svg><use href="#left"/></svg></button>
        </div>
      </section>
    </div>

    <aside class="side-col">
      <section class="area outliner">
        <div class="bar">
          <div class="grp"><button class="b w54" aria-label="Editor type"><svg class="ic"><use href="#tree"/></svg><svg class="ch"><use href="#chev"/></svg></button></div>
          <div class="grp"><button class="b w54" aria-label="Display mode"><svg class="ic"><use href="#layers"/></svg><svg class="ch"><use href="#chev"/></svg></button></div>
          <span class="s64"></span>
          <label class="search"><svg class="ic"><use href="#search"/></svg><input type="search" aria-label="Filter outliner"></label>
          <span class="fill"></span>
          <div class="grp"><button class="b w54" aria-label="Filter"><svg class="ic"><use href="#funnel"/></svg><svg class="ch"><use href="#chev"/></svg></button></div>
          <div class="grp"><button class="b w33" aria-label="New collection"><svg class="ic"><use href="#newcoll"/></svg></button></div>
        </div>
        <ul class="tree">
          <li class="d0"><svg class="ic dark"><use href="#coll"/></svg><span>Scene Collection</span></li>
          <li class="d1"><svg class="tri open"><use href="#tri"/></svg><em class="boxed"><svg class="ic dark"><use href="#coll"/></svg></em><span>Collection</span><div class="tg"><svg><use href="#tickbox"/></svg><svg><use href="#ptr"/></svg><svg><use href="#eye"/></svg><svg><use href="#photo"/></svg></div></li>
          <li class="d2"><svg class="tri"><use href="#tri"/></svg><em><svg class="ic cyan"><use href="#camera"/></svg></em><span>Camera</span><em class="boxed data"><svg class="ic pink"><use href="#cameraline"/></svg></em><div class="tg"><svg><use href="#ptr"/></svg><svg><use href="#eye"/></svg><svg><use href="#photo"/></svg></div></li>
          <li class="d2 cur"><svg class="tri"><use href="#tri"/></svg><em class="boxed"><svg class="ic cyan"><use href="#mesh"/></svg></em><span>Cube</span><em class="data"><svg class="ic pink"><use href="#meshdata"/></svg></em><div class="tg"><svg><use href="#ptr"/></svg><svg><use href="#eye"/></svg><svg><use href="#photo"/></svg></div></li>
          <li class="d2"><svg class="tri"><use href="#tri"/></svg><em><svg class="ic cyan"><use href="#light"/></svg></em><span>Light</span><em class="data"><svg class="ic pink"><use href="#lightdata"/></svg></em><div class="tg"><svg><use href="#ptr"/></svg><svg><use href="#eye"/></svg><svg><use href="#photo"/></svg></div></li>
        </ul>
      </section>

      <section class="area props">
        <div class="bar">
          <div class="grp"><button class="b w54" aria-label="Editor type"><svg class="ic"><use href="#toggles"/></svg><svg class="ch"><use href="#chev"/></svg></button></div>
          <span class="fill"></span>
          <label class="search"><svg class="ic"><use href="#search"/></svg><input type="search" aria-label="Search properties"></label>
          <span class="s211"></span>
        </div>
        <div class="pbody">
          <nav class="ptabs">
            <button aria-label="Tool"><svg class="ic"><use href="#tools"/></svg></button>
            <button class="gap" aria-label="Render"><svg class="ic"><use href="#render"/></svg></button>
            <button aria-label="Output"><svg class="ic"><use href="#output"/></svg></button>
            <button aria-label="View Layer"><svg class="ic"><use href="#layers"/></svg></button>
            <button aria-label="Scene"><svg class="ic"><use href="#scene"/></svg></button>
            <button class="c-or" aria-label="World"><svg class="ic"><use href="#world"/></svg></button>
            <button class="gap c-bl" aria-label="Object"><svg class="ic"><use href="#objmode"/></svg></button>
            <button class="c-gr" aria-label="Modifiers"><svg class="ic"><use href="#wrench"/></svg></button>
            <button class="c-gr" aria-label="Particles"><svg class="ic"><use href="#particles"/></svg></button>
            <button class="c-gr" aria-label="Physics"><svg class="ic"><use href="#physics"/></svg></button>
            <button class="c-gr" aria-label="Constraints"><svg class="ic"><use href="#constraint"/></svg></button>
            <button class="c-pk" aria-label="Data"><svg class="ic"><use href="#meshdata"/></svg></button>
            <button class="c-or on" aria-label="Material"><svg class="ic"><use href="#material"/></svg></button>
            <button class="gap c-or" aria-label="Texture"><svg class="ic"><use href="#checker"/></svg></button>
          </nav>
          <div class="pcontent">
            <div class="cut"><span></span></div>
            <div class="rows">
              <label class="pr"><span>Clearcoat Roughness</span><i class="sb"><i class="sock"></i></i><input class="sl" style="--fill:2%" value="0.030"><u></u></label>
              <label class="pr"><span>IOR</span><i class="sb"><i class="sock"></i></i><input value="1.450"><u></u></label>
              <label class="pr"><span>Transmission</span><i class="sb"><i class="sock"></i></i><input class="sl" value="0.000"><u></u></label>
              <label class="pr"><span>Transmission Rough...</span><i class="sb"><i class="sock"></i></i><input class="sl" value="0.000"><u></u></label>
              <label class="pr"><span>Emission</span><i class="sb"><i class="sock yellow"></i></i><button class="sw black"></button><u></u></label>
              <label class="pr"><span>Emission Strength</span><i class="sb"><i class="sock"></i></i><input value="1.000"><u></u></label>
              <label class="pr"><span>Alpha</span><i class="sb"><i class="sock"></i></i><input class="sl" style="--fill:100%" value="1.000"><u></u></label>
              <label class="pr"><span>Normal</span><i class="sb"><i class="sock purple"></i></i><button class="link">Default</button></label>
              <label class="pr"><span>Clearcoat Normal</span><i class="sb"><i class="sock purple"></i></i><button class="link">Default</button></label>
              <label class="pr"><span>Tangent</span><i class="sb"><i class="sock purple"></i></i><button class="link">Default</button></label>
            </div>
            <h2><svg class="tri"><use href="#tri"/></svg>Volume<svg class="grip"><use href="#grip"/></svg></h2>
            <div class="rows"><label class="pr"><span>Volume</span><i class="sb"><i class="sock green"></i></i><button class="link">None</button></label></div>
            <h2><svg class="tri"><use href="#tri"/></svg>Settings<svg class="grip"><use href="#grip"/></svg></h2>
            <div class="act"><button>Save As OctaneDB</button></div>
            <h2><svg class="tri"><use href="#tri"/></svg>Converters<svg class="grip"><use href="#grip"/></svg></h2>
            <div class="act"><button>Convert To Octane Materials</button></div>
            <h2><svg class="tri"><use href="#tri"/></svg>Viewport Display<svg class="grip"><use href="#grip"/></svg></h2>
            <div class="rows dense">
              <label class="pr"><span>Color</span><button class="sw white"></button><u></u></label>
              <label class="pr"><span>Metallic</span><input class="sl" value="0.000"><u></u></label>
              <label class="pr"><span>Roughness</span><input class="sl" style="--fill:39%" value="0.400"><u></u></label>
            </div>
            <h2 class="sub"><svg class="tri"><use href="#tri"/></svg>Settings</h2>
            <div class="rows wide">
              <div class="pr"><span></span><label class="chk"><input type="checkbox">Backface Culling</label></div>
              <label class="pr"><span>Blend Mode</span><div class="dd"><select><option>Opaque</option></select><svg class="ch"><use href="#chev"/></svg></div></label>
              <label class="pr"><span>Shadow Mode</span><div class="dd"><select><option>Opaque</option></select><svg class="ch"><use href="#chev"/></svg></div></label>
              <label class="pr off"><span>Clip Threshold</span><input class="sl" style="--fill:49%" value="0.500"></label>
              <div class="pr"><span></span><label class="chk"><input type="checkbox">Screen Space Refraction</label></div>
              <label class="pr"><span>Refraction Depth</span><input value="0 m"></label>
              <div class="pr"><span></span><label class="chk"><input type="checkbox">Subsurface Translucency</label></div>
              <label class="pr"><span>Pass Index</span><input value="0"></label>
            </div>
          </div>
        </div>
      </section>
    </aside>
  </main>

  <footer class="status">
    <div><svg class="mouse" viewBox="0 0 28 26"><use href="#mouse" width="28" height="26"/><path d="M1 12V5Q1 1 5 1H10V12Z" fill="currentColor"/></svg>Select<svg class="mouse second" viewBox="0 0 28 26"><use href="#mouse" width="28" height="26"/><path d="M1 12V5Q1 1 5 1H10V12ZM22 0L24 4V14H23V4ZM26 4H27V12H26Z" fill="currentColor"/></svg>Box Select</div>
    <div><svg class="mouse" viewBox="0 0 28 26"><use href="#mouse" width="28" height="26"/><rect x="8" y="4" width="4" height="10" rx="2" fill="currentColor"/></svg>Rotate View</div>
    <div><svg class="mouse" viewBox="0 0 28 26"><use href="#mouse" width="28" height="26"/><path d="M19 12V5Q19 1 15 1H10V12Z" fill="currentColor"/></svg>Object Context Me...</div>
    <span>2.91.0</span>
  </footer>
  <div class="taskbar"><i></i></div>

  <div class="tooltip" role="tooltip">Rotate<br>Rotate selected items.<br><span>Shortcut: Shift Spacebar, R</span></div>
  <svg class="ink" viewBox="3190 1440 655 136"><path d="M3565 1446C3588 1446 3590 1448 3605 1453L3648 1460L3708 1467Q3736 1468 3760 1474Q3773 1474 3790 1481L3824 1492Q3843 1502 3842 1520Q3843 1540 3831 1550Q3820 1556 3764 1566Q3734 1572 3700 1571L3566 1565L3532 1562L3446 1558L3325 1551Q3290 1548 3273 1545L3256 1544L3222 1536Q3210 1528 3202 1525Q3197 1518 3200 1511Q3205 1502 3215 1499L3235 1492Q3250 1486 3260 1486H3283" fill="none" stroke="#0f0" stroke-width="5"/></svg>
</div>
<script src="grid.js"></script>
</body>
</html>
```
FILE: styles.css
```css
* { box-sizing: border-box; }
:root {
  --bar: #484848; --btn: #5f5f5f; --btn-lt: #696969; --text: #d2d2d2;
  --field: #9098a0; --slider: #b4b4b4; --accent: #f49e1c; --canvas: #65707b; --gap: #353535;
}
body { margin: 0; background: #fff; color: var(--text); font: 16px/20px "DejaVu Sans", sans-serif; }
button, input, select { font: inherit; color: inherit; border: 0; margin: 0; padding: 0; background: none; border-radius: 0; min-width: 0; outline: 0; }
select { appearance: none; flex: 1; width: 0; }
i, em, b { font-style: normal; font-weight: normal; }
u { text-decoration: none; }
svg { display: block; flex: none; }
.sprite { position: absolute; width: 0; height: 0; }
.ic { width: 25px; height: 25px; }
.ch { width: 12px; height: 12px; }
.fill { flex: 1; }

.app { position: relative; display: flex; flex-direction: column; height: 100vh; padding-right: 5px; overflow: hidden; }
.titlebar { flex: none; height: 40px; display: flex; align-items: center; padding-left: 3px; color: #000; font: 19px/24px "Open Sans", sans-serif; }
.applogo { --hole: #fff; --dot: #25598f; color: #e87d0d; width: 27px; height: 24px; }
.apptitle { margin-left: 5px; flex: 1; }
.wincontrols { display: flex; gap: 65px; padding-right: 35px; }
.wincontrols button, .wincontrols svg { width: 16px; height: 16px; }

.topbar { flex: none; height: 45px; background: #303030; display: flex; align-items: center; padding: 0 14px 0 16px; }
.menulogo { --hole: #303030; --dot: currentColor; width: 29px; height: 26px; }
.menus { display: flex; margin-left: -2px; }
.menus button { padding: 0 14px; }
.topbar .menus { margin-left: 2px; }
.tabs { display: flex; align-self: flex-end; height: 37px; margin-left: 28px; }
.tabs button { background: #3b3b3b; color: #979797; padding: 0 19px; border-radius: 5px 5px 0 0; }
.tabs .on { background: #464646; color: var(--accent); padding: 0 18px; }
.tabs .plus { padding: 0; width: 35px; font-size: 22px; }
.idblocks { margin-left: auto; display: flex; gap: 9px; }

.grp { display: flex; flex: none; height: 33px; border-radius: 5px; overflow: hidden; }
.grp.tall { height: 35px; }
.b { background: var(--btn); display: flex; align-items: center; justify-content: center; gap: 4px; height: 100%; }
.b + .b { border-left: 1px solid #4c4c4c; }
.w33 { width: 33px; } .w34 { width: 34px; } .w35 { width: 35px; } .w54 { width: 54px; }
.w138 { width: 138px; } .w147 { width: 147px; } .w190 { width: 190px; }
.lt { background: var(--btn-lt); }
.dim { background: #505050; color: #6a6a6a; }
.dim .bright { color: #a0a0a0; }
.dim2 { background: #575757; color: #7c7c7c; }
.gray { color: #aaa; }
.b.on { background: var(--accent); color: #000; }
.name { width: 210px; background: var(--field); color: #1c1c1c; padding-left: 14px; }
.opts { width: 105px; gap: 10px; }
.dd { display: flex; align-items: center; height: 33px; background: var(--btn); border-radius: 5px; padding: 0 6px 0 7px; gap: 11px; flex: none; }
.slot { padding-left: 14px; }
.plain { color: #9c9c9c; margin: 0 4px; }

.workspace { flex: 1; min-height: 0; background: var(--gap); display: grid; grid-template-columns: minmax(0, 1fr) 664px; gap: 3px; padding: 2px 1px 0; }
.main-col, .side-col, .left-col { display: flex; flex-direction: column; gap: 3px; min-width: 0; min-height: 0; }
.editors { flex: 1; min-height: 0; display: grid; grid-template-columns: 1774fr 1394fr; gap: 3px; }
.area { display: flex; flex-direction: column; border-radius: 6px; overflow: hidden; background: var(--bar); min-width: 0; min-height: 0; }
.bar { flex: none; height: 44px; display: flex; align-items: center; gap: 10px; padding: 0 14px; }
.bar.second { height: 45px; }
.s11 { width: 11px; flex: none; } .s64 { width: 64px; } .s211 { width: 211px; }
.s337 { flex: 327; } .s577 { flex: 577; }
.view3d { flex: 955; }
.left-col .nodes { flex: 922; }
.activetool { width: 40px; height: 38px; border: 2px dashed var(--accent); margin: 0 13px 0 11px; display: grid; place-items: center; color: #eee; }

.v3body { flex: 1; display: flex; min-height: 0; }
.toolbar { width: 101px; padding: 15px 0 0 14px; display: flex; flex-direction: column; gap: 9px; }
.toolgrp { width: 71px; display: flex; flex-direction: column; gap: 1px; border-radius: 8px; overflow: hidden; background: #353535; flex: none; }
.toolgrp button { position: relative; height: 60px; background: #585858; display: grid; place-items: center; padding-right: 3px; }
.toolgrp button svg { width: 44px; height: 44px; }
.toolgrp .on { background: var(--accent); }
.toolgrp .hov { background: #6d6d6d; }
.toolgrp i { position: absolute; right: 4px; bottom: 4px; border: 4px solid transparent; border-right-color: #151515; border-bottom-color: #151515; }
.viewport { position: relative; flex: 1; background: #5d656b; min-width: 0; }
.scene3d { position: absolute; inset: 0; width: 100%; height: 100%; }
.viewinfo { position: absolute; left: 16px; top: 13px; margin: 0; font-size: 18px; line-height: 32px; text-shadow: 1px 2px 2px #0008; }
.axisgizmo { position: absolute; right: 15px; top: 14px; width: 140px; height: 145px; }
.navbtns { position: absolute; right: 16px; top: 159px; display: flex; flex-direction: column; gap: 5px; }
.navbtns button { width: 48px; height: 48px; border-radius: 50%; background: #4a4f52; display: grid; place-items: center; color: #ddd; }
.navbtns svg { width: 30px; height: 30px; }
.fold { position: absolute; top: 26px; width: 14px; height: 24px; background: #4c5460; color: #b5b8bb; }
.fold svg { width: 12px; height: 24px; }
.fold.l { left: 0; border-radius: 0 5px 5px 0; }
.fold.r { right: 0; border-radius: 5px 0 0 5px; }
.fold.v3 { background: #474c50; }

.chk { display: flex; align-items: center; gap: 5px; flex: none; }
input[type=checkbox] { appearance: none; width: 24px; height: 25px; border: 1px solid #222; border-radius: 5px; background: #696969; display: grid; place-items: center; }
input[type=checkbox]:checked { background: var(--accent); }
input[type=checkbox]:checked::before { content: ""; width: 45%; height: 70%; border: solid #111; border-width: 0 3px 3px 0; transform: rotate(40deg); margin-bottom: 20%; }
.bar .chk { margin-left: -2px; }
.bar .after { margin-left: 49px; }

.canvas { position: relative; flex: 1; background: var(--canvas); overflow: hidden; }
.wires { position: absolute; inset: 0; width: 100%; height: 100%; }
.treename { position: absolute; left: 51px; bottom: 45px; margin: 0; font-size: 18px; line-height: 24px; }
.node { position: absolute; background: #404345; border: 1px solid #2c2e30; border-radius: 6px; box-shadow: 0 3px 8px 2px #0006; display: flex; flex-direction: column; font-size: 13px; line-height: 16px; padding: 0 13px 4px; }
.node.sel { border-color: #d98d2b; }
.node h3 { flex: none; height: 27px; margin: 0 -13px; padding-left: 12px; font-weight: normal; font-size: 15px; display: flex; align-items: center; gap: 10px; border-radius: 5px 5px 0 0; background: linear-gradient(#494c4d, #404345); }
.node h3.dk { background: #38393a; }
.node h3 svg { width: 9px; height: 11px; color: #a8a8a8; }
.out { position: relative; flex: none; height: 42px; display: flex; align-items: center; justify-content: flex-end; padding-right: 11px; font-size: 15px; margin-right: -1px; }
.ddrow { flex: none; height: 37px; display: flex; align-items: center; }
.node .dd { flex: 1; height: 27px; padding: 0 3px 0 10px; border-radius: 5px; color: #c4c4c4; }
.row { position: relative; flex: 1; display: flex; align-items: center; min-height: 0; }
.lab { font-size: 15px; padding-left: 4px; flex: 1; white-space: nowrap; }
.num { flex: 1; display: flex; align-items: center; height: 26px; border-radius: 6px; background: var(--field); color: #1c1c1c; padding: 0 19px 0 21px; min-width: 0; }
.num b { white-space: nowrap; }
.num input { flex: 1; width: 0; text-align: right; }
.sock { width: 13px; height: 13px; border-radius: 50%; border: 1px solid #1c1c1c; background: #a1a1a1; flex: none; }
.node .sock { position: absolute; left: -21px; }
.node .out .sock { left: auto; right: -19px; }
.purple { background: #6363c7; } .green { background: #63c763; } .dgreen { background: #118a24; } .yellow { background: #c7c729; } .olive { background: #b0a22c; }
.sw { border: 1px solid #6a6a6a; border-radius: 5px; }
.node .sw { width: 90px; height: 27px; }
.blue { background: #4094ff; } .orange { background: #cb5f26; } .black { background: #000; } .white { background: #e7e7e7; }
.node .chk { gap: 3px; white-space: nowrap; }
.node input[type=checkbox] { width: 18px; height: 18px; border-radius: 4px; }
.node input[type=checkbox]:checked::before { border-width: 0 2px 2px 0; }
.sun { left: 517px; top: 201px; width: 220px; height: 254px; }
.day { left: 808px; top: 184px; width: 221px; height: 618px; }
.wout { left: 1158px; top: 246px; width: 193px; height: 191px; }
.small { font-size: 10px; line-height: 12px; padding: 0 10px 4px; border-radius: 3px; }
.small h3 { font-size: 11px; height: 20px; margin: 0 -10px; padding-left: 9px; gap: 7px; border-radius: 2px 2px 0 0; }
.small h3 svg { width: 7px; height: 7px; }
.small .out { height: 32px; font-size: 11px; padding-right: 10px; }
.small .lab { font-size: 11px; padding-left: 3px; }
.small .ddrow { height: 27px; }
.small .dd { height: 19px; padding: 0 2px 0 7px; }
.small .ch { width: 8px; height: 8px; }
.small .num { height: 19px; padding: 0 15px; }
.small .num.sl { padding: 0 11px; height: 20px; }
.node .sl { border: 1px solid #1c1c1c; }
.sl, .pr input.sl { background: linear-gradient(to right, var(--field) var(--fill, 0%), var(--slider) var(--fill, 0%)); }
.small .sock { width: 10px; height: 10px; left: -16px; }
.small .out .sock { right: -15px; }
.small .sw { width: 110px; height: 20px; }
.bsdf { left: 555px; top: 758px; width: 250px; height: 625px; }
.mout { left: 857px; top: 758px; width: 147px; height: 185px; }
.mout .ddrow { height: 31px; }
.vec { position: relative; flex: none; height: 60px; display: flex; flex-direction: column; gap: 1px; border-radius: 4px; }
.vec input { flex: 1; width: 100%; text-align: center; background: var(--field); color: #1c1c1c; }
.vec input:first-of-type { border-radius: 4px 4px 0 0; }
.vec input:last-of-type { border-radius: 0 0 4px 4px; }
.vec .sock { top: 15px; }

.timeline { flex: none; height: 154px; }
.play { width: 116px; gap: 10px; } .key { width: 99px; gap: 10px; }
.pk { border-radius: 5px 0 0 5px; }
.timeline .menus { margin-left: -11px; }
.frame { width: 129px; text-align: center; }
.frame, .range { background: var(--field); color: #1c1c1c; height: 100%; }
.range { width: 150px; display: flex; align-items: center; padding: 0 24px 0 28px; }
.range + .range { border-left: 1px solid #4c4c4c; }
.range input { flex: 1; width: 0; text-align: right; }
.track { position: relative; flex: 1; background: linear-gradient(#898e9b 41px, transparent 41px), linear-gradient(to right, #53606a 117px, var(--canvas) 117px calc(100% - 118px), #53606a calc(100% - 118px)); }
.cells { display: flex; height: 100%; padding: 0 60px 0 163px; }
.cells span { flex: 1; text-align: center; font-size: 18px; line-height: 43px; color: #343848; background: linear-gradient(#586571, #586571) 50% 41px / 1px 100% no-repeat, linear-gradient(#6c7883, #6c7883) 0 41px / 1px 100% no-repeat; }
.scroller { position: absolute; left: 14px; right: 14px; bottom: 3px; height: 18px; border: 1px solid #3a3a3a; border-radius: 9px; background: #575757; display: flex; justify-content: space-between; align-items: center; padding: 0 2px; }
.scroller i { width: 11px; height: 11px; border-radius: 50%; background: #2b2b2b; }
.playhead { position: absolute; left: 96px; top: 5px; width: 41px; height: 30px; border-radius: 6px; background: #c27b12; color: #e8e8e8; text-align: center; line-height: 32px; font-size: 16px; }
.playhead::after { content: ""; position: absolute; left: 20px; top: 30px; width: 2px; height: 54px; background: #cf8118; }

.search { width: 190px; height: 35px; border-radius: 6px; background: var(--field); color: #1c1c1c; display: flex; align-items: center; padding-left: 9px; flex: none; }
.search input { flex: 1; width: 0; }
.outliner { flex: none; height: 654px; }
.outliner .bar, .props .bar { padding: 0 15px; }
.tree { flex: 1; margin: 0; padding: 0; list-style: none; background: repeating-linear-gradient(#7d888e 0 35px, #828d92 35px 70px); background-position-y: 1px; color: #1b1b1b; }
.tree li { height: 35px; display: flex; align-items: center; padding-right: 15px; }
.tree li:first-child { height: 36px; }
.tree span { padding-top: 6px; }
.tree .ic { width: 27px; height: 27px; }
.d0 { padding-left: 38px; } .d0 span { margin-left: 10px; }
.d1 { padding-left: 46px; } .d2 { padding-left: 81px; }
.tree .tri { width: 11px; height: 11px; margin-right: 12px; transform: rotate(-90deg); }
.tree .tri.open { transform: none; }
.tree em { width: 34px; height: 31px; display: grid; place-items: center; margin-right: 9px; border-radius: 7px; }
.boxed { background: #6a7378; }
.cur { background: #40474f; } .cur .boxed { background: #333a44; } .cur span { color: #f3a62c; }
.tree .data { margin-left: 38px; }
.tree .data .ic { width: 25px; height: 25px; }
.dark { color: #303335; } .cyan { color: #1487b5; } .pink { color: #b0668f; }
.tg { margin-left: auto; display: flex; gap: 12px; color: #d4d6d7; align-items: center; margin-right: 4px; }
.tg svg { width: 23px; height: 23px; }

.props { flex: 1; }
.pbody { flex: 1; min-height: 0; display: flex; overflow: hidden; }
.ptabs { width: 49px; background: #3b3b3b; display: flex; flex-direction: column; padding-top: 13px; flex: none; }
.ptabs button { height: 49px; flex: none; display: grid; place-items: center; color: #9c9c9c; margin-left: 2px; border-radius: 6px 0 0 6px; }
.ptabs .gap { margin-top: 15px; }
.ptabs .c-or { color: #b3762d; } .ptabs .c-bl { color: #1278a8; } .ptabs .c-gr { color: #4f9a72; } .ptabs .c-pk { color: #a8648d; }
.ptabs .on { background: var(--bar); }
.pcontent { flex: 1; min-width: 0; overflow: hidden; }
.cut { height: 7px; padding: 0 49px 0 236px; }
.cut span { display: block; height: 3px; margin-left: 34px; background: #b4b4b4; border-bottom: 1px solid #1c1c1c; border-radius: 0 0 6px 6px; }
.pcontent h2 { height: 43px; margin: 0; background: #414141; font-weight: normal; font-size: 18px; display: flex; align-items: center; padding: 0 15px 0 16px; }
h2 .tri { width: 11px; height: 11px; color: #a5a5a5; margin-right: 11px; }
h2 .grip { width: 19px; height: 9px; color: #b5b5b5; margin-left: auto; }
.pcontent h2.sub { background: none; padding-left: 40px; margin: 12px 0 9px; }
.rows { padding: 0 0 10px; }
h2 + .rows { padding-top: 10px; }
.pr { display: flex; align-items: center; height: 43px; padding-right: 49px; }
.pr > span { width: 220px; margin-right: 16px; text-align: right; font-size: 18px; white-space: nowrap; flex: none; }
.sb { width: 34px; height: 33px; background: var(--btn); border-radius: 5px 0 0 5px; display: grid; place-items: center; flex: none; }
.pr > input { flex: 1; width: 0; height: 33px; text-align: center; background: var(--field); color: #1c1c1c; border-radius: 7px; }
.pr > input.sl { height: 35px; border: 1px solid #1c1c1c; }
.pr > .sb + input, .pr > .sb + .sw { border-radius: 0 7px 7px 0; }
.pr .sw { flex: 1; height: 34px; }
.pr u { width: 7px; height: 7px; border-radius: 50%; background: #c4c4c4; margin: 0 -22px 0 15px; }
.link { flex: 1; height: 33px; background: var(--btn); text-align: left; color: #c4c4c4; border-radius: 0 5px 5px 0; padding-left: 2px; }
.act { padding: 14px 14px 14px 15px; height: 61px; }
.act button { width: 100%; height: 33px; border-radius: 5px; background: #686868; }
.rows.dense { padding: 13px 0 0; }
.dense .pr { height: 38px; }
.wide .pr { padding-right: 14px; }
.wide .pr > span { width: 234px; }
.wide .dd { flex: 1; padding-left: 13px; }
h2.sub + .rows { padding: 0; }
.off { opacity: .45; }

.status { flex: none; height: 34px; background: #373737; color: #a6a6a6; font-size: 18px; display: flex; align-items: center; padding: 2px 30px 0 21px; }
.status div { width: 396px; display: flex; align-items: center; }
.status > span { margin-left: auto; }
.mouse { width: 28px; height: 26px; margin-right: 11px; }
.mouse.second { margin-left: 14px; margin-right: 13px; }
.taskbar { flex: none; height: 2px; background: #262626; margin-right: -5px; padding-left: 2604px; }
.taskbar i { display: block; width: 60px; height: 2px; background: #555; }

.tooltip { position: absolute; left: 92px; top: 385px; width: 272px; height: 122px; padding: 15px 22px; background: #1f2121; border-radius: 8px; box-shadow: 3px 6px 12px #0009; line-height: 34px; white-space: nowrap; }
.tooltip span { color: #a3a3a3; }
.ink { position: absolute; right: 0; top: 1440px; width: 655px; height: 136px; overflow: visible; }
```
FILE: grid.js
```js
// Ground plane projected with two vanishing points on one horizon.
const ORIGIN = [993, 652], VX = [311, 125], VY = [4000, 125];
const KX = -0.1234, KY = 0.0502, NEAR = 0.3;

function project(x, y) {
  const w = 1 + KX * x + KY * y;
  return [
    (ORIGIN[0] + KX * x * VX[0] + KY * y * VY[0]) / w,
    (ORIGIN[1] + KX * x * VX[1] + KY * y * VY[1]) / w
  ];
}

function segment(fixed, value, reach) {
  const k = fixed === 'x' ? KX : KY;
  const o = fixed === 'x' ? KY : KX;
  let from = -reach, to = reach;
  const limit = (NEAR - 1 - k * value) / o;
  if (o > 0) from = Math.max(from, limit); else to = Math.min(to, limit);
  if (from >= to) return '';
  const a = fixed === 'x' ? project(value, from) : project(from, value);
  const b = fixed === 'x' ? project(value, to) : project(to, value);
  return `M${a[0].toFixed(1)} ${a[1].toFixed(1)}L${b[0].toFixed(1)} ${b[1].toFixed(1)}`;
}

function draw(id, pick, reach) {
  let d = '';
  for (let n = -reach; n <= reach; n++) {
    if (n === 0 || !pick(n)) continue;
    d += segment('x', n, reach) + segment('y', n, reach);
  }
  const path = document.createElementNS('http://www.w3.org/2000/svg', 'path');
  path.setAttribute('d', d);
  document.getElementById(id).appendChild(path);
}

draw('minor', n => n % 10 !== 0, 60);
draw('major', n => n % 10 === 0, 100);
```
